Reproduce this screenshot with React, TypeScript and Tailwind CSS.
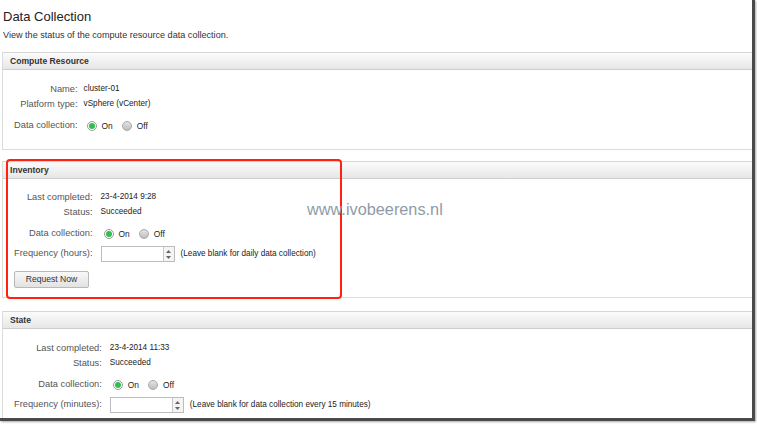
import type { ReactNode } from "react";

const font = { fontFamily: '"Liberation Sans", Arial, sans-serif' };

function Panel({ title, children, className = "" }: { title: string; children: ReactNode; className?: string }) {
  return (
    <section className={`border-l border-b border-[#dcdcdc] ${className}`}>
      <div className="h-[18px] flex items-center pl-[7px] border-t border-b border-t-[#d6d6d6] border-b-[#cdcdcd] bg-gradient-to-b from-[#fbfbfb] to-[#e7e7e7] text-[8.6px] font-bold text-[#333]">
        {title}
      </div>
      {children}
    </section>
  );
}

function Label({ children, className = "h-[15px]" }: { children: ReactNode; className?: string }) {
  return <div className={`flex items-center justify-end text-[9.3px] text-[#555] ${className}`}>{children}</div>;
}

function Value({ children, className = "h-[15px]" }: { children: ReactNode; className?: string }) {
  return <div className={`flex items-center text-[8.2px] text-[#222] ${className}`}>{children}</div>;
}

function Radios() {
  return (
    <div className="flex items-center ml-[3px] text-[8.4px] text-[#222]">
      <span className="w-[10px] h-[10px] rounded-full border border-[#9a9a9a] bg-white flex items-center justify-center">
        <span className="w-[6px] h-[6px] rounded-full bg-[#2fbf4a]" />
      </span>
      <span className="ml-[5px]">On</span>
      <span className="ml-[9px] w-[10px] h-[10px] rounded-full border border-[#a8a8a8] bg-gradient-to-b from-[#e4e4e4] to-[#bdbdbd]" />
      <span className="ml-[5px]">Off</span>
    </div>
  );
}

function NumberInput() {
  return (
    <div className="flex h-[16px] w-[74px] border border-[#bcbcbc] bg-white">
      <div className="flex-1" />
      <div className="w-[11px] border-l border-[#c8c8c8] bg-[#f4f4f4] flex flex-col items-center justify-center gap-[3px]">
        <svg width="5" height="3" viewBox="0 0 5 3">
          <path d="M0 3 L2.5 0 L5 3 Z" fill="#666" />
        </svg>
        <svg width="5" height="3" viewBox="0 0 5 3">
          <path d="M0 0 L2.5 3 L5 0 Z" fill="#666" />
        </svg>
      </div>
    </div>
  );
}

export default function App() {
  return (
    <div className="w-[757px] h-[424px] bg-white relative" style={font}>
      <div className="w-[755px] h-[421px] overflow-hidden border-r-[3px] border-b-[3px] border-[#4a4a4a] shadow-[1px_1px_2px_#aaa]">
        <div className="pl-[3px] pt-[9px]">
          <h1 className="text-[13px] leading-[16px] text-[#222]">Data Collection</h1>
          <p className="mt-[4px] leading-[13px] text-[9.1px] text-[#333]">View the status of the compute resource data collection.</p>
        </div>

        <div className="pl-[2px] mt-[10px]">
          <Panel title="Compute Resource">
            <div className="grid grid-cols-[auto_1fr] gap-x-[6px] pl-[11px] pt-[12px] pb-[15px]">
              <Label>Name:</Label>
              <Value>cluster-01</Value>
              <Label>Platform type:</Label>
              <Value>vSphere (vCenter)</Value>
              <Label className="mt-[6px] h-[16px]">Data collection:</Label>
              <div className="mt-[6px] h-[16px] flex items-center">
                <Radios />
              </div>
            </div>
          </Panel>

          <Panel title="Inventory" className="mt-[11px]">
            <div className="grid grid-cols-[auto_1fr] gap-x-[8px] pl-[11px] pt-[11px] pb-[9px]">
              <Label>Last completed:</Label>
              <Value>23-4-2014 9:28</Value>
              <Label>Status:</Label>
              <Value>Succeeded</Value>
              <Label className="mt-[6px] h-[16px]">Data collection:</Label>
              <div className="mt-[6px] h-[16px] flex items-center">
                <Radios />
              </div>
              <Label className="mt-[4px] h-[16px]">Frequency (hours):</Label>
              <Value className="mt-[4px] h-[16px] gap-[6px]">
                <NumberInput />
                <span>(Leave blank for daily data collection)</span>
              </Value>
              <div className="col-span-2 mt-[9px] flex">
                <button className="w-[75px] h-[17px] border border-[#b9b9b9] rounded-[2px] bg-gradient-to-b from-[#f8f8f8] to-[#e2e2e2] text-[#333] text-[8.6px] leading-[15px]">
                  Request Now
                </button>
              </div>
            </div>
          </Panel>

          <Panel title="State" className="mt-[13px]">
            <div className="grid grid-cols-[auto_1fr] gap-x-[8px] pl-[11px] pt-[12px] pb-[10px]">
              <Label>Last completed:</Label>
              <Value>23-4-2014 11:33</Value>
              <Label>Status:</Label>
              <Value>Succeeded</Value>
              <Label className="mt-[6px] h-[16px]">Data collection:</Label>
              <div className="mt-[6px] h-[16px] flex items-center">
                <Radios />
              </div>
              <Label className="mt-[4px] h-[16px]">Frequency (minutes):</Label>
              <Value className="mt-[4px] h-[16px] gap-[6px]">
                <NumberInput />
                <span>(Leave blank for data collection every 15 minutes)</span>
              </Value>
            </div>
          </Panel>
        </div>
      </div>

      {/* annotation overlay */}
      <div className="absolute left-[6px] top-[159px] w-[336px] h-[140px] border-2 border-[#f21] rounded-[4px] pointer-events-none" />
      <div className="absolute left-[307px] top-[199px] text-[16.3px] leading-[20px] text-[#8f9ba8] pointer-events-none">
        www.ivobeerens.nl
      </div>
    </div>
  );
}
